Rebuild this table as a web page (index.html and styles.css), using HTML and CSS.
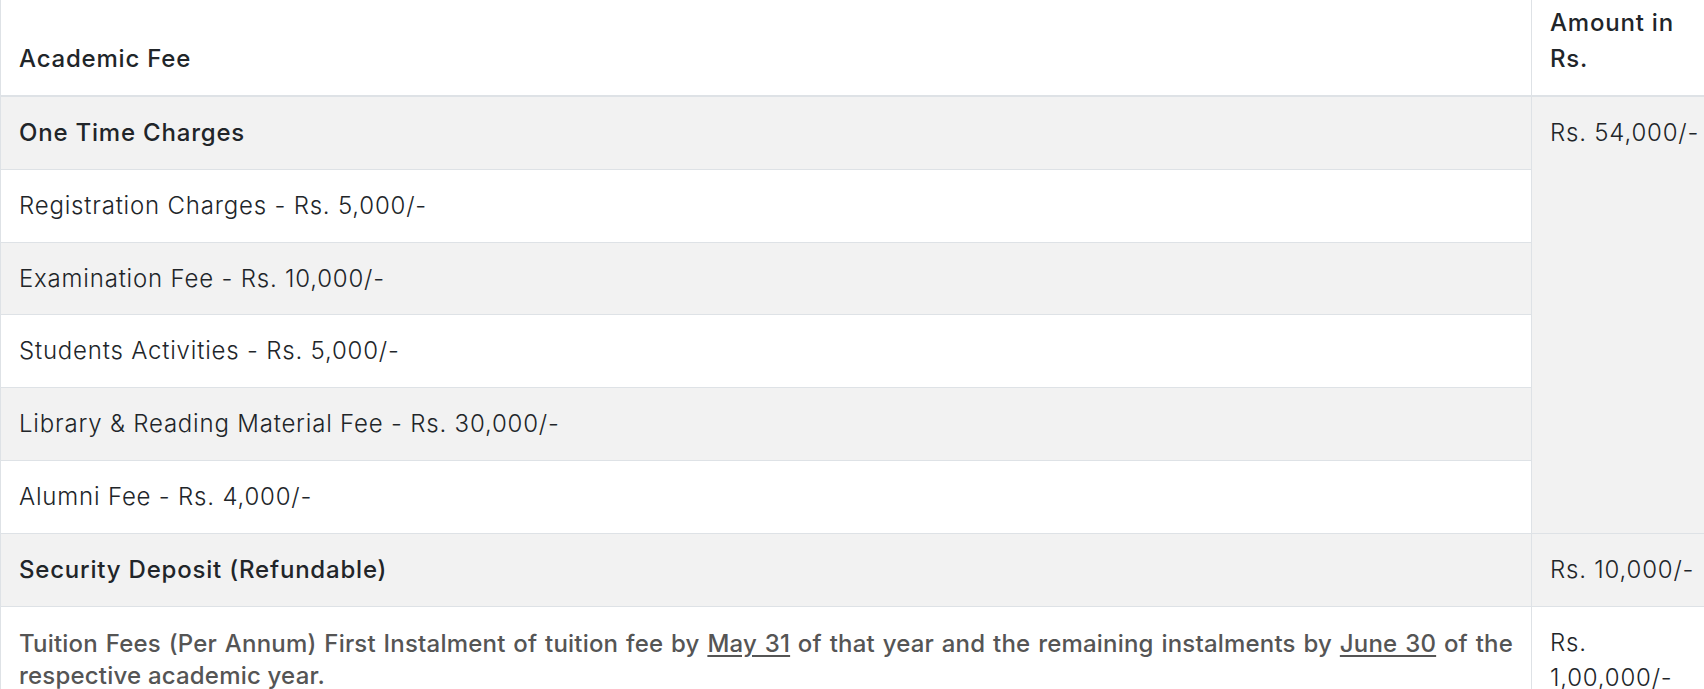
FILE: index.html
```html
<!DOCTYPE html>
<html lang="en">
<head>
<meta charset="utf-8">
<title>Academic Fee</title>
<link rel="stylesheet" href="styles.css">
</head>
<body>
<table class="fee-table">
  <colgroup>
    <col class="col-desc">
    <col class="col-amt">
  </colgroup>
  <thead>
    <tr>
      <th>Academic Fee</th>
      <th>Amount in Rs.</th>
    </tr>
  </thead>
  <tbody>
    <tr class="striped">
      <td class="group">One Time Charges</td>
      <td rowspan="6" class="amount">Rs. 54,000/-</td>
    </tr>
    <tr>
      <td>Registration Charges - Rs. 5,000/-</td>
    </tr>
    <tr class="striped">
      <td>Examination Fee - Rs. 10,000/-</td>
    </tr>
    <tr>
      <td>Students Activities - Rs. 5,000/-</td>
    </tr>
    <tr class="striped">
      <td>Library &amp; Reading Material Fee - Rs. 30,000/-</td>
    </tr>
    <tr>
      <td>Alumni Fee - Rs. 4,000/-</td>
    </tr>
    <tr class="striped">
      <td class="group">Security Deposit (Refundable)</td>
      <td class="amount">Rs. 10,000/-</td>
    </tr>
    <tr>
      <td class="note">Tuition Fees (Per Annum) First Instalment of tuition fee by <span class="date">May 31</span> of that year and the remaining instalments by <span class="date">June 30</span> of the respective academic year.</td>
      <td class="amount">Rs. 1,00,000/-</td>
    </tr>
  </tbody>
</table>
</body>
</html>
```
FILE: styles.css
```css
html, body {
  margin: 0;
  padding: 0;
  overflow: hidden;
  background: #ffffff;
}

body {
  font-family: "Inter", "Liberation Sans", sans-serif;
  color: #212529;
  font-size: 24px;
  line-height: 36px;
  letter-spacing: 0.8px;
}

.fee-table {
  border-collapse: collapse;
  table-layout: fixed;
  width: 1720px;
}

.col-desc { width: 1531px; }
.col-amt { width: 189px; }

.fee-table th,
.fee-table td {
  border: 1px solid #dee2e6;
  padding: 18px;
  text-align: left;
  vertical-align: top;
}

.fee-table th {
  font-weight: 500;
  vertical-align: bottom;
  padding-top: 5px;
  border-top: 0;
  border-bottom: 2px solid #dee2e6;
}

.fee-table td {
  font-weight: 300;
  line-height: 35.8px;
}

.fee-table tr.striped td,
.fee-table td.amount[rowspan] {
  background: #f2f2f2;
}

.fee-table td.group {
  font-weight: 500;
}

.fee-table td.note {
  font-weight: 500;
  color: #555555;
  text-align: justify;
  letter-spacing: 0.2px;
  line-height: 32.6px;
  padding-top: 21px;
}

.fee-table td.note .date {
  text-decoration: underline;
  text-underline-offset: 3px;
}
```
